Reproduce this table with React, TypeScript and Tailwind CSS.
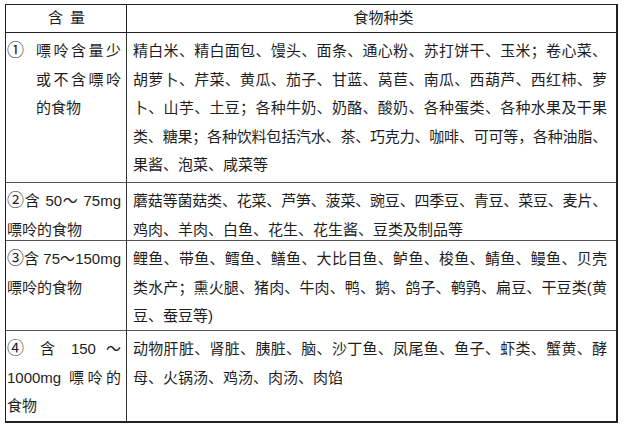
import React from "react";

const font = {
  fontFamily: '"Liberation Sans", "Noto Sans CJK SC", sans-serif',
};

function Lines({ lines, tight = [] }: { lines: string[]; tight?: number[] }) {
  return (
    <div>
      {lines.map((l, i) => (
        <div
          key={i}
          className={
            (i < lines.length - 1
              ? "whitespace-nowrap text-justify [text-align-last:justify]"
              : "whitespace-nowrap text-left") + (tight.includes(i) ? " tracking-[-0.25px]" : "")
          }
        >
          {l}
        </div>
      ))}
    </div>
  );
}

function Circ({ c }: { c: string }) {
  return <span className="font-['Noto_Sans_CJK_SC'] text-[17px] leading-none">{c}</span>;
}

function LeftCell({ children, last = false, h }: { children: React.ReactNode; last?: boolean; h: string }) {
  return (
    <div className={`border-r border-[#333] pl-[1px] pr-[5px] pt-[4px] ${last ? "" : "border-b border-b-[#555]"} ${h}`}>
      {children}
    </div>
  );
}

function RightCell({ children, last = false, h }: { children: React.ReactNode; last?: boolean; h: string }) {
  return (
    <div className={`pl-[6px] pr-[9px] pt-[4px] ${last ? "" : "border-b border-[#555]"} ${h}`}>{children}</div>
  );
}

export default function App() {
  return (
    <div
      lang="zh-CN"
      className="w-[624px] h-[428px] bg-white pt-[4px] pl-[5px] text-[15px] leading-[28.5px] text-[#1e1e1e]"
      style={font}
    >
      <div className="w-[613px] border-l border-t border-r-2 border-b-2 border-[#222] grid grid-cols-[121px_1fr]">
        <div className="h-[28px] border-r border-b border-[#222] flex items-center justify-center pl-[1px]">
          <span className="tracking-[7px] -mr-[7px]">含量</span>
        </div>
        <div className="h-[28px] border-b border-[#222] flex items-center justify-center pl-[24px]">
          食物种类
        </div>

        <LeftCell h="h-[150px]">
          <div className="flex">
            <span className="w-[29px] shrink-0">
              <Circ c="①" />
            </span>
            <div className="flex-1">
              <Lines lines={["嘌呤含量少", "或不含嘌呤", "的食物"]} />
            </div>
          </div>
        </LeftCell>
        <RightCell h="h-[150px]">
          <Lines
            tight={[3]}
            lines={[
              "精白米、精白面包、馒头、面条、通心粉、苏打饼干、玉米；卷心菜、",
              "胡萝卜、芹菜、黄瓜、茄子、甘蓝、莴苣、南瓜、西葫芦、西红柿、萝",
              "卜、山芋、土豆；各种牛奶、奶酪、酸奶、各种蛋类、各种水果及干果",
              "类、糖果；各种饮料包括汽水、茶、巧克力、咖啡、可可等，各种油脂、",
              "果酱、泡菜、咸菜等",
            ]}
          />
        </RightCell>

        <LeftCell h="h-[58px]">
          <div className="whitespace-nowrap [text-align-last:justify]">
            <Circ c="②" />含 50～ 75mg
          </div>
          <div>嘌呤的食物</div>
        </LeftCell>
        <RightCell h="h-[58px]">
          <Lines
            tight={[0]}
            lines={[
              "蘑菇等菌菇类、花菜、芦笋、菠菜、豌豆、四季豆、青豆、菜豆、麦片、",
              "鸡肉、羊肉、白鱼、花生、花生酱、豆类及制品等",
            ]}
          />
        </RightCell>

        <LeftCell h="h-[90px]">
          <div className="whitespace-nowrap [text-align-last:justify]">
            <Circ c="③" />含 75～150mg
          </div>
          <div>嘌呤的食物</div>
        </LeftCell>
        <RightCell h="h-[90px]">
          <Lines
            lines={[
              "鲤鱼、带鱼、鳕鱼、鳝鱼、大比目鱼、鲈鱼、梭鱼、鲭鱼、鳗鱼、贝壳",
              "类水产；熏火腿、猪肉、牛肉、鸭、鹅、鸽子、鹌鹑、扁豆、干豆类(黄",
              "豆、蚕豆等)",
            ]}
          />
        </RightCell>

        <LeftCell h="h-[90px]" last>
          <div className="whitespace-nowrap [text-align-last:justify]">
            <Circ c="④" /> 含 150 ～
          </div>
          <div className="whitespace-nowrap [text-align-last:justify]">1000mg 嘌呤的</div>
          <div>食物</div>
        </LeftCell>
        <RightCell h="h-[90px]" last>
          <Lines
            lines={[
              "动物肝脏、肾脏、胰脏、脑、沙丁鱼、凤尾鱼、鱼子、虾类、蟹黄、酵",
              "母、火锅汤、鸡汤、肉汤、肉馅",
            ]}
          />
        </RightCell>
      </div>
    </div>
  );
}
